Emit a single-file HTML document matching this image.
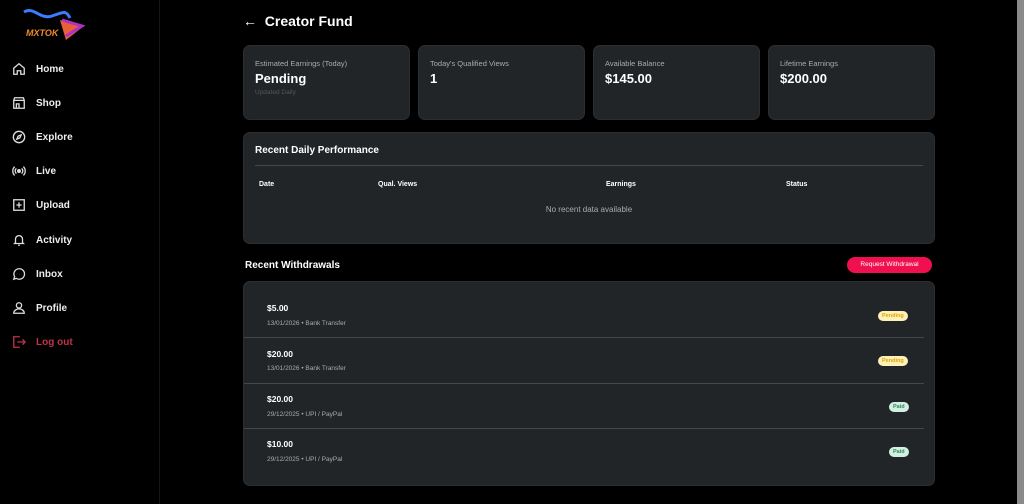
<!DOCTYPE html><html><head><style>
*{margin:0;padding:0;box-sizing:border-box}
body{width:1024px;height:504px;background:#000;font-family:"Liberation Sans",sans-serif;color:#fff;position:relative;overflow:hidden}
.side{position:absolute;left:0;top:0;width:160px;height:504px;border-right:1px solid #151515}
.nav{position:absolute;left:12px;display:flex;align-items:center;font-size:10px;font-weight:bold;color:#eee}
.nav svg{width:14px;height:14px;margin-right:10px;fill:none;stroke:#ddd;stroke-width:1.5}
.card{position:absolute;background:#222527;border-radius:7px;border:1px solid #2c2f31}
.lab{font-size:7.5px;color:#aaa;position:absolute;left:11px;top:13px}
.val{font-size:13px;font-weight:bold;position:absolute;left:11px;top:25px}
.th{position:absolute;top:48px;font-size:7px;font-weight:bold}
.amt{position:absolute;left:23px;font-size:8.5px;font-weight:bold}
.sub{position:absolute;left:23px;font-size:6.5px;color:#aaa}
.div{position:absolute;left:0;width:680px;border-top:1px solid #44484b}
.pill{position:absolute;font-size:5.5px;font-weight:bold;border-radius:6px;padding:2px 4px}
.pend{background:#fdf0b8;color:#e0a800}
.paid{background:#d3efe3;color:#2e8a5a}
</style></head><body>
<div class="side">
<svg style="position:absolute;left:22px;top:6px" width="64" height="36" viewBox="0 0 64 36"><path d="M2 6 C12 0 18 14 30 10 S44 4 48 12" stroke="#3a7bff" stroke-width="3" fill="none"/><path d="M38 14 L62 20 L44 34 Z" fill="#e8603a"/><path d="M40 14 L60 20 L44 30" fill="none" stroke="#b030c0" stroke-width="3"/><text x="4" y="30" font-size="9" font-weight="bold" font-style="italic" fill="#f08a2a" font-family="Liberation Sans">MXTOK</text></svg>
<div class="nav" style="top:62px"><svg viewBox="0 0 16 16"><path d="M2 7 8 2l6 5v7h-4v-4H6v4H2z"/></svg>Home</div>
<div class="nav" style="top:96px"><svg viewBox="0 0 16 16"><path d="M2 5h12v9H2zM2 5l1-3h10l1 3M5 14V9h3v5"/></svg>Shop</div>
<div class="nav" style="top:130px"><svg viewBox="0 0 16 16"><circle cx="8" cy="8" r="6.5"/><path d="M10.5 5.5 7 7 5.5 10.5 9 9z"/></svg>Explore</div>
<div class="nav" style="top:164px"><svg viewBox="0 0 16 16"><circle cx="8" cy="8" r="1.5" fill="#ddd"/><path d="M5 5a4 4 0 0 0 0 6M11 5a4 4 0 0 1 0 6M3 3a7 7 0 0 0 0 10M13 3a7 7 0 0 1 0 10"/></svg>Live</div>
<div class="nav" style="top:198px"><svg viewBox="0 0 16 16"><rect x="2" y="2" width="12" height="12"/><path d="M8 5v6M5 8h6"/></svg>Upload</div>
<div class="nav" style="top:233px"><svg viewBox="0 0 16 16"><path d="M4 11V7a4 4 0 0 1 8 0v4l1 1H3zM7 14h2"/></svg>Activity</div>
<div class="nav" style="top:267px"><svg viewBox="0 0 16 16"><path d="M8 2a6 6 0 1 1-3 11l-3 1 1-3A6 6 0 0 1 8 2z"/><path d="M5 8h.1M8 8h.1M11 8h.1" stroke-width="2"/></svg>Inbox</div>
<div class="nav" style="top:301px"><svg viewBox="0 0 16 16"><circle cx="8" cy="5" r="3"/><path d="M2 14c0-3 3-5 6-5s6 2 6 5z"/></svg>Profile</div>
<div class="nav" style="top:335px;color:#c0324a"><svg viewBox="0 0 16 16" style="stroke:#c0324a"><path d="M9 2H2v12h7M6 8h9M12 5l3 3-3 3"/></svg>Log out</div>
</div>
<div style="position:absolute;left:243px;top:13px;font-size:14px;font-weight:bold">←&nbsp;&nbsp;Creator Fund</div>
<div class="card" style="left:243px;top:45px;width:167px;height:75px"><div class="lab">Estimated Earnings (Today)</div><div class="val">Pending</div><div style="position:absolute;left:11px;top:43px;font-size:6.5px;color:#555">Updated Daily</div></div>
<div class="card" style="left:418px;top:45px;width:167px;height:75px"><div class="lab">Today's Qualified Views</div><div class="val">1</div></div>
<div class="card" style="left:593px;top:45px;width:167px;height:75px"><div class="lab">Available Balance</div><div class="val">$145.00</div></div>
<div class="card" style="left:768px;top:45px;width:167px;height:75px"><div class="lab">Lifetime Earnings</div><div class="val">$200.00</div></div>
<div class="card" style="left:243px;top:132px;width:692px;height:112px">
<div style="position:absolute;left:11px;top:12px;font-size:10px;font-weight:bold">Recent Daily Performance</div>
<div style="position:absolute;left:11px;right:11px;top:32px;border-top:1px solid #44484b"></div>
<div class="th" style="left:15px">Date</div><div class="th" style="left:134px">Qual. Views</div><div class="th" style="left:362px">Earnings</div><div class="th" style="left:542px">Status</div>
<div style="position:absolute;left:0;right:0;top:72px;text-align:center;font-size:8px;color:#aaa">No recent data available</div>
</div>
<div style="position:absolute;left:245px;top:260px;font-size:10px;font-weight:bold">Recent Withdrawals</div>
<div style="position:absolute;left:847px;top:257px;width:85px;height:16px;background:#f0104f;border-radius:8px;font-size:6.5px;text-align:center;line-height:16px">Request Withdrawal</div>
<div class="card" style="left:243px;top:281px;width:692px;height:205px">
<div class="amt" style="top:21px">$5.00</div><div class="sub" style="top:38px">13/01/2026 • Bank Transfer</div><div class="pill pend" style="left:634px;top:29px">Pending</div>
<div class="div" style="top:55px"></div>
<div class="amt" style="top:67px">$20.00</div><div class="sub" style="top:83px">13/01/2026 • Bank Transfer</div><div class="pill pend" style="left:634px;top:74px">Pending</div>
<div class="div" style="top:101px"></div>
<div class="amt" style="top:112px">$20.00</div><div class="sub" style="top:129px">29/12/2025 • UPI / PayPal</div><div class="pill paid" style="left:645px;top:120px">Paid</div>
<div class="div" style="top:146px"></div>
<div class="amt" style="top:157px">$10.00</div><div class="sub" style="top:174px">29/12/2025 • UPI / PayPal</div><div class="pill paid" style="left:645px;top:165px">Paid</div>
</div>
<div style="position:absolute;left:1017px;top:0;width:7px;height:504px;background:#8a8a8a"></div>
</body></html>
